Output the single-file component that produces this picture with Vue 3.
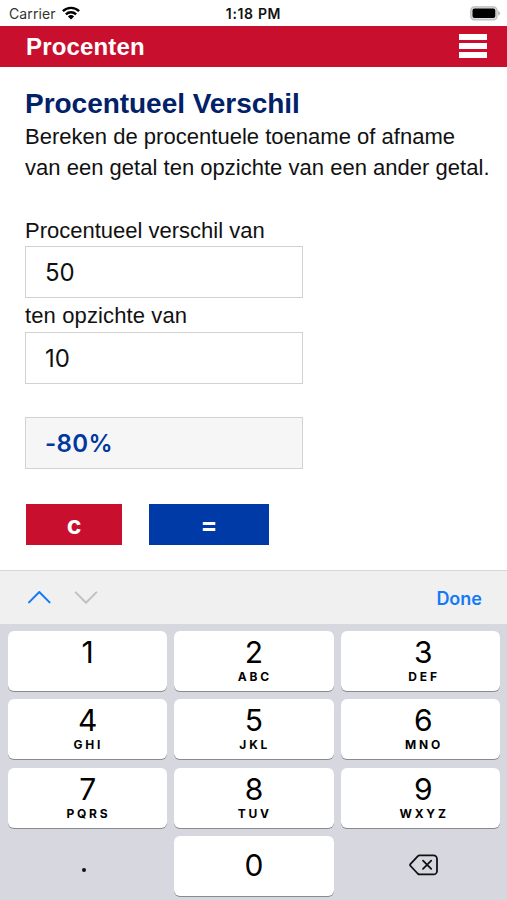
<script setup>
import { ref } from 'vue'

const base = ref('50')
const other = ref('10')
const keys = [
  { digit: '1', letters: '' },
  { digit: '2', letters: 'ABC' },
  { digit: '3', letters: 'DEF' },
  { digit: '4', letters: 'GHI' },
  { digit: '5', letters: 'JKL' },
  { digit: '6', letters: 'MNO' },
  { digit: '7', letters: 'PQRS' },
  { digit: '8', letters: 'TUV' },
  { digit: '9', letters: 'WXYZ' },
]
</script>

<template>
  <div class="screen">
    <div class="status">
      <div class="carrier">
        <span>Carrier</span>
        <svg class="wifi" viewBox="0 0 18 14" width="18" height="14">
          <g fill="none" stroke="#000" stroke-width="2.4">
            <path d="M.9 5.2a11.6 11.6 0 0 1 16.2 0" />
            <path d="M3.9 8.3a7.3 7.3 0 0 1 10.2 0" />
          </g>
          <path d="M9 13.6 5.9 10.5a4.5 4.5 0 0 1 6.2 0z" />
        </svg>
      </div>
      <span class="time">1:18 PM</span>
      <svg class="battery" viewBox="0 0 31 15" width="31" height="15">
        <rect x=".8" y=".8" width="26.2" height="13" rx="3.6" fill="#ddd" stroke="#bcbcbc" stroke-width="1.3" />
        <rect x="2.5" y="2.5" width="22.8" height="9.6" rx="2" />
        <path d="M28.2 5v4.6c1.2-.4 1.8-1.2 1.8-2.3s-.6-1.9-1.8-2.3z" fill="#b5b5b5" />
      </svg>
    </div>

    <header class="bar">
      <span class="brand">Procenten</span>
      <div class="menu"><i></i><i></i><i></i></div>
    </header>

    <main class="content">
      <h1>Procentueel Verschil</h1>
      <p class="intro">Bereken de procentuele toename of afname<br />van een getal ten opzichte van een ander getal.</p>
      <label class="label first" for="base">Procentueel verschil van</label>
      <input id="base" v-model="base" class="field" />
      <label class="label second" for="other">ten opzichte van</label>
      <input id="other" v-model="other" class="field" />
      <div class="field result">-80%</div>
      <div class="actions">
        <button class="clear">c</button>
        <button class="equals">=</button>
      </div>
    </main>

    <div class="toolbar">
      <svg viewBox="0 0 70 14" width="70" height="14" fill="none" stroke-width="2" stroke-linecap="round" stroke-linejoin="round">
        <path d="M1 12.4 11.3 2 21.6 12.4" stroke="#1479f7" />
        <path d="M47.7 2.4 58 12.8 68.3 2.4" stroke="#c0c1c3" />
      </svg>
      <span class="done">Done</span>
    </div>

    <div class="keyboard">
      <div v-for="key in keys" :key="key.digit" class="key">
        <span class="digit">{{ key.digit }}</span>
        <span class="letters">{{ key.letters }}</span>
      </div>
      <div class="key plain"><span class="dot"></span></div>
      <div class="key zero"><span class="digit">0</span></div>
      <div class="key plain">
        <svg class="delete" viewBox="0 0 30 22" width="30" height="22" fill="none" stroke="#111" stroke-width="1.8" stroke-linecap="round" stroke-linejoin="round">
          <path d="M10.8 1.4H24.5a3.5 3.5 0 0 1 3.5 3.5v12a3.5 3.5 0 0 1-3.5 3.5H10.8a3 3 0 0 1-2.2-.9L1.6 12a1.6 1.6 0 0 1 0-2.2L8.6 2.3a3 3 0 0 1 2.2-.9z" />
          <path d="m14 6.6 8.2 8.2M22.2 6.6l-8.2 8.2" />
        </svg>
      </div>
    </div>
  </div>
</template>

<style>
body {
  margin: 0;
  background: #fff;
}
</style>

<style scoped>
.screen {
  box-sizing: border-box;
  width: 507px;
  height: 900px;
  overflow: hidden;
  display: flex;
  flex-direction: column;
  font-family: "Liberation Sans", Arial, sans-serif;
  color: #111;
}
.status {
  flex: none;
  height: 26px;
  box-sizing: border-box;
  padding: 1px 6px 0 9px;
  display: grid;
  grid-template-columns: 1fr auto 1fr;
  align-items: center;
  font-family: Inter, sans-serif;
  font-size: 14px;
  line-height: 26px;
}
.carrier {
  display: flex;
  align-items: center;
  gap: 6px;
  letter-spacing: 0.1px;
  color: #333;
}
.wifi {
  margin-top: -3px;
}
.time {
  font-weight: 600;
  font-size: 14px;
  letter-spacing: 0.65px;
  margin: 0 0 0 -3px;
}
.battery {
  justify-self: end;
  margin-top: -1px;
}
.bar {
  flex: none;
  height: 41px;
  box-sizing: border-box;
  padding: 0 20px 0 26px;
  background: #c8102e;
  display: flex;
  align-items: center;
  justify-content: space-between;
}
.brand {
  color: #fff;
  font-size: 24px;
  line-height: 40px;
  font-weight: 700;
  letter-spacing: 0.15px;
}
.menu {
  width: 28px;
  margin-top: -1px;
  display: grid;
  gap: 3px;
}
.menu i {
  height: 6px;
  background: #fff;
}
.content {
  flex: none;
  height: 503px;
  box-sizing: border-box;
  padding: 20px 0 0 25px;
  display: flex;
  flex-direction: column;
  align-items: flex-start;
}
h1 {
  margin: 0 0 1px;
  color: #012169;
  font-size: 28px;
  line-height: 33px;
  font-weight: 700;
  letter-spacing: -0.03px;
}
.intro {
  margin: 0;
  font-size: 22px;
  line-height: 31px;
  letter-spacing: 0.02px;
  white-space: nowrap;
}
.label {
  font-size: 22px;
  line-height: 34px;
  height: 34px;
}
.label.first {
  margin-top: 30px;
  height: 33px;
  line-height: 35px;
}
.label.second {
  line-height: 35px;
  letter-spacing: 0.12px;
}
.field {
  box-sizing: border-box;
  width: 278px;
  height: 52px;
  margin: 0;
  padding: 0 19px;
  border: 1px solid #d2d2d2;
  border-radius: 0;
  background: #fff;
  font-family: Inter, sans-serif;
  font-size: 24px;
  line-height: 50px;
  color: #111;
  outline: none;
}
.result {
  margin-top: 33px;
  line-height: 51px;
  background: #f6f6f6;
  color: #0038a0;
  font-weight: 600;
  letter-spacing: 0.4px;
}
.actions {
  display: flex;
  gap: 27px;
  margin: 35px 0 0 1px;
}
.actions button {
  height: 41px;
  padding: 1px 0 0;
  border: 0;
  color: #fff;
  font-family: Inter, sans-serif;
  font-size: 25px;
  font-weight: 700;
}
.actions .clear {
  width: 96px;
  background: #c8102e;
}
.actions .equals {
  width: 120px;
  background: #003aa6;
}
.toolbar {
  flex: none;
  height: 54px;
  box-sizing: border-box;
  padding: 0 25px 0 28px;
  border-top: 1px solid #d6d6d6;
  background: #f0f0f1;
  display: flex;
  align-items: center;
  justify-content: space-between;
}
.toolbar svg {
  margin-top: -2px;
}
.done {
  margin-top: 1px;
  font-family: Inter, sans-serif;
  font-size: 18px;
  font-weight: 600;
  color: #1479f7;
}
.keyboard {
  flex: 1;
  padding: 7px 7px 0 8px;
  background: #d6d7df;
  display: grid;
  grid-template-columns: repeat(3, 1fr);
  grid-auto-rows: 60px;
  align-content: start;
  gap: 8.4px 7px;
  font-family: Inter, sans-serif;
  color: #000;
}
.key {
  box-sizing: border-box;
  display: flex;
  flex-direction: column;
  align-items: center;
  border-radius: 6px;
  background: #fff;
  box-shadow: 0 1px 0.5px #898a8d;
}
.key:nth-child(3n) {
  padding-left: 6px;
}
.digit {
  margin-top: 6px;
  font-size: 30px;
  line-height: 30px;
  font-weight: 400;
}
.letters {
  margin-top: 3px;
  padding-left: 1.5px;
  font-size: 12px;
  line-height: 14px;
  font-weight: 700;
  letter-spacing: 2.8px;
}
.plain {
  background: none;
  box-shadow: none;
  justify-content: center;
}
.zero {
  justify-content: center;
}
.zero .digit {
  margin: -2px 0 0;
}
.dot {
  width: 4px;
  height: 4px;
  margin: 8px 7px 0 0;
  border-radius: 50%;
  background: #111;
}
.delete {
  margin: -3px 0 0 2px;
}
</style>
